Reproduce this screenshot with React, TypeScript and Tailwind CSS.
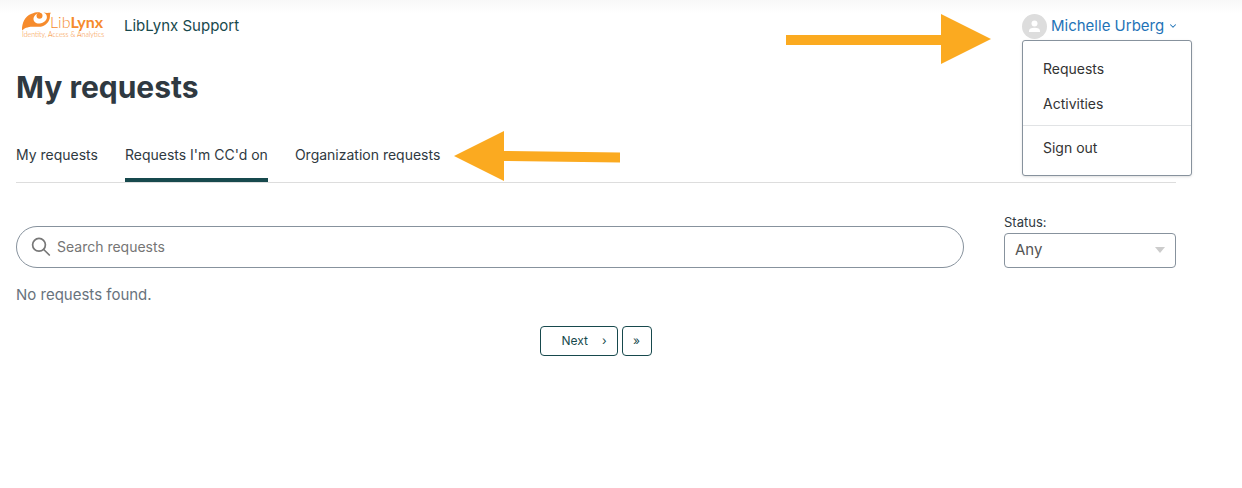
import { ChevronDown } from "lucide-react";

const tabs = [
  { label: "My requests", active: false },
  { label: "Requests I'm CC'd on", active: true },
  { label: "Organization requests", active: false },
];

const menuItemClass = "block px-5 py-2 text-sm leading-[19px] text-[#333333] hover:bg-gray-100";
const pageButtonClass = "flex h-[30px] items-center rounded border border-[#17494d] text-xs text-[#17494d]";

function Logo() {
  return (
    <svg width="82" height="30" viewBox="0 0 82 30" role="img" aria-label="LibLynx" fill="#f68b2c" className="overflow-visible">
      <path d="M0 19.500C-.2 11.500 3 5.500 9 3C12.500 1.500 15 1.200 18.500 1.400C14 2.500 11.500 5 11.500 8C11.500 10.800 14 12.700 17.500 12.500C22 12.200 25 9 24.900 6C24.700 3.500 23.500 2.300 21.500 1.500C24 2.200 26.500 1.800 29 1.800C27.500 3 28.300 5 27.700 7.500C26.300 12.500 22 15.800 17 15.800C10.500 15.800 4.500 15 0 19.500Z" />
      <circle cx="17.500" cy="4.800" r="3" />
      <text x="28" y="17" fontSize="16" fontFamily="Lato, sans-serif" fontWeight="300">
        Lib<tspan fontWeight="700">Lynx</tspan>
      </text>
      <text x="0" y="26" fontSize="7" fontFamily="Lato, sans-serif" fontWeight="300">Identity, Access &amp; Analytics</text>
    </svg>
  );
}

function Header() {
  return (
    <header className="flex h-[52px] items-center bg-linear-to-b from-[#f8f8f8] to-white to-25% pl-[22px] pr-[66px]">
      <a href="#" className="flex items-center gap-5 text-[15px] text-[#17494d]">
        <Logo />
        LibLynx Support
      </a>
      <div className="relative ml-auto w-[154px]">
        <button type="button" aria-expanded="true" className="flex w-full items-center gap-1 text-[15px] whitespace-nowrap text-[#1f73b7]">
          <svg width="25" height="25" viewBox="0 0 25 25" className="shrink-0">
            <circle cx="12.500" cy="12.500" r="12.500" fill="#dddddd" />
            <circle cx="12.500" cy="9.500" r="3" fill="#fff" />
            <path d="M7 18V17C7 14.800 9 13.800 12.500 13.800S18 14.800 18 17V18Z" fill="#fff" />
          </svg>
          Michelle Urberg
          <ChevronDown className="ml-auto size-[10px] shrink-0" strokeWidth={2.5} />
        </button>
        <nav className="absolute top-full left-0 z-10 mt-px w-[170px] rounded-[3px] border border-[#87929d] bg-white py-[10px] shadow-sm">
          <a href="#" className={menuItemClass}>Requests</a>
          <a href="#" className={menuItemClass}>Activities</a>
          <hr className="my-1 border-[#e1e3e5]" />
          <a href="#" className={menuItemClass}>Sign out</a>
        </nav>
      </div>
    </header>
  );
}

export default function App() {
  return (
    <div className="relative bg-white font-[Inter,sans-serif] text-[#2f3941]">
      <Header />
      <main className="pr-[66px] pl-4">
        <h1 className="pt-4 text-[30px] leading-[38px] font-bold">My requests</h1>
        <nav className="mt-[39px] flex gap-[27px] border-b border-[#dddddd] text-sm leading-5">
          {tabs.map((tab) => (
            <a
              key={tab.label}
              href="#"
              aria-current={tab.active ? "page" : undefined}
              className={tab.active ? "border-b-4 border-[#17494d] pb-[13px]" : "pb-[17px]"}
            >
              {tab.label}
            </a>
          ))}
        </nav>
        <div className="mt-[29px] flex items-end gap-10">
          <label className="flex h-[42px] flex-1 items-center gap-[6px] rounded-full border border-[#87929d] px-[14px]">
            <svg width="20" height="20" viewBox="0 0 20 20" fill="none" stroke="#777777" strokeWidth="1.700" strokeLinecap="round">
              <circle cx="8" cy="7.800" r="6.400" />
              <path d="M12.700 12.500L18.300 18" />
            </svg>
            <input
              type="search"
              aria-label="Search requests"
              placeholder="Search requests"
              className="min-w-0 flex-1 text-sm outline-none placeholder:text-[#757575]"
            />
          </label>
          <div className="w-[172px]">
            <label htmlFor="status" className="block text-[13px] leading-[21px]">Status:</label>
            <div className="relative">
              <select id="status" className="h-[35px] w-full appearance-none rounded border border-[#87929d] px-[10px] text-[15px] text-[#555555]">
                <option>Any</option>
              </select>
              <svg width="10" height="6" viewBox="0 0 10 6" className="pointer-events-none absolute top-[14px] right-[11px]">
                <path d="M0 0H10L5 6Z" fill="#cccccc" />
              </svg>
            </div>
          </div>
        </div>
        <p className="mt-4 text-[15px] leading-[22px] text-[#68737d]">No requests found.</p>
        <nav aria-label="Pagination" className="mt-5 flex justify-center gap-1">
          <button type="button" className={`${pageButtonClass} gap-[14px] pr-[10px] pl-5`}>
            Next <span>›</span>
          </button>
          <button type="button" aria-label="Last page" className={`${pageButtonClass} w-[30px] justify-center`}>»</button>
        </nav>
      </main>

      <svg width="205" height="50" viewBox="0 0 205 50" className="absolute top-[14px] right-[251px]" aria-hidden="true">
        <path d="M0 21H155V0L205 25L155 50V31H0Z" fill="#fbaa20" />
      </svg>
      <svg width="166" height="50" viewBox="0 0 166 50" className="absolute top-[131px] left-[454px]" aria-hidden="true">
        <path d="M0 25L50 0V20L166 21.500V31.500L50 30V50Z" fill="#fbaa20" />
      </svg>
    </div>
  );
}
